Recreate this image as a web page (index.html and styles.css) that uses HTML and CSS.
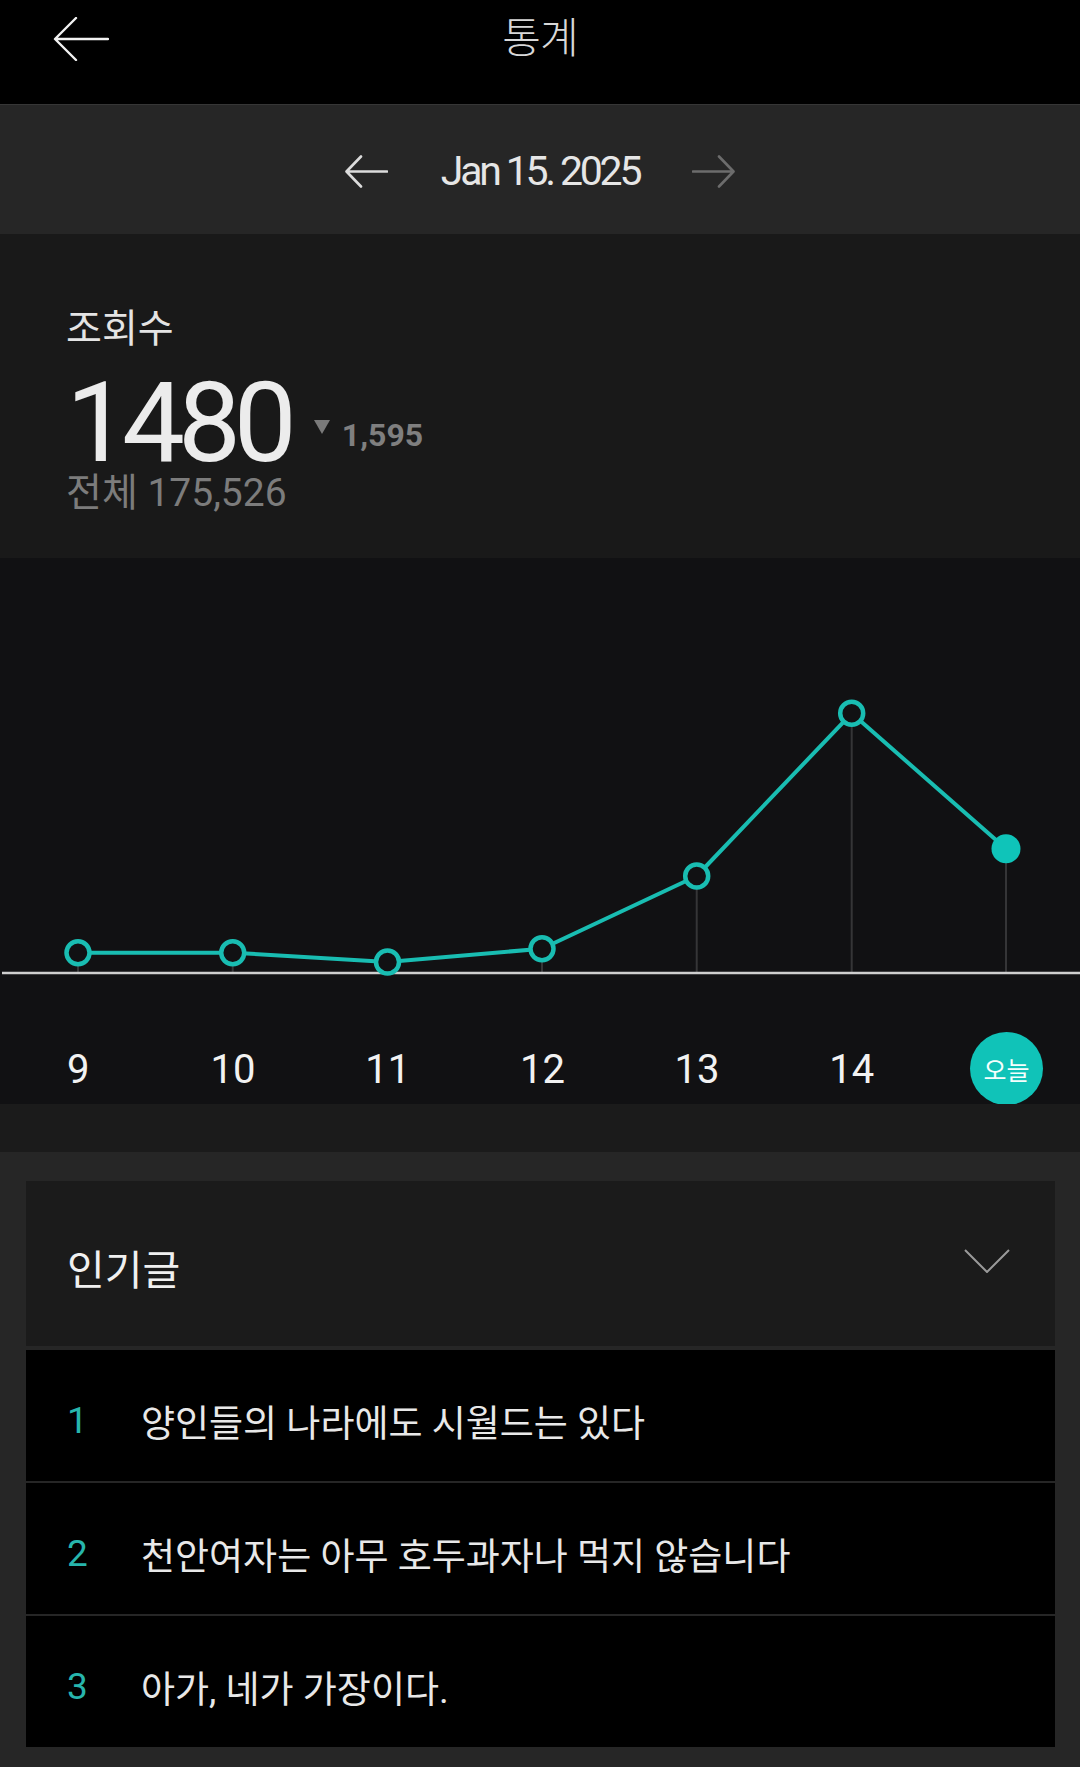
FILE: index.html
```html
<!DOCTYPE html>
<html lang="ko">
<head>
  <meta charset="UTF-8" />
  <meta name="viewport" content="width=device-width, initial-scale=1.0" />
  <title>통계</title>
  <link rel="stylesheet" href="styles.css">
</head>
<body>
  <!-- 상단 바 -->
  <header class="topbar">
    <button class="back" aria-label="뒤로">
      <svg width="56" height="44" viewBox="0 0 56 44">
        <path d="M55 22H3M23 1L2 22l21 21" fill="none" stroke="#f2f2f2" stroke-width="2.4" stroke-linecap="round" stroke-linejoin="round"/>
      </svg>
    </button>
    <h1 class="title">통계</h1>
    <span></span>
  </header>

  <!-- 날짜 선택 -->
  <div class="date-bar">
    <svg class="date-arrow" width="43" height="33" viewBox="0 0 43 33">
      <path d="M42 16.5H2M16 1.5L1.5 16.5 16 31.5" fill="none" stroke="#dcdcdc" stroke-width="2.6" stroke-linecap="round" stroke-linejoin="round"/>
    </svg>
    <span class="date">Jan 15. 2025</span>
    <svg class="date-arrow" width="43" height="33" viewBox="0 0 43 33">
      <path d="M1 16.5h40M27 1.5l14.5 15L27 31.5" fill="none" stroke="#6c6c6c" stroke-width="2.6" stroke-linecap="round" stroke-linejoin="round"/>
    </svg>
  </div>

  <!-- 조회수 -->
  <section class="stats">
    <div class="stats-label">조회수</div>
    <div class="stats-row">
      <span class="stats-count">1480</span>
      <span class="stats-diff"><i class="tri"></i>1,595</span>
    </div>
    <div class="stats-total">전체 175,526</div>
  </section>

  <!-- 그래프 -->
  <section class="chart">
    <svg class="plot" width="1080" height="432" viewBox="0 0 1080 432">
      <g stroke="#353537" stroke-width="2">
        <line x1="78" y1="395" x2="78" y2="415"/>
        <line x1="232.7" y1="395" x2="232.7" y2="415"/>
        <line x1="387.5" y1="404" x2="387.5" y2="415"/>
        <line x1="542" y1="391" x2="542" y2="415"/>
        <line x1="696.7" y1="318" x2="696.7" y2="415"/>
        <line x1="851.7" y1="155" x2="851.7" y2="415"/>
        <line x1="1006" y1="291" x2="1006" y2="415"/>
      </g>
      <line x1="2" y1="415" x2="1080" y2="415" stroke="#cfcfcf" stroke-width="2.5"/>
      <polyline points="78,394.7 232.7,394.7 387.5,404 542,390.7 696.7,318 851.7,155.3 1006,290.7" fill="none" stroke="#19bdb2" stroke-width="4" stroke-linejoin="round"/>
      <g fill="#111113" stroke="#19bdb2" stroke-width="4.5">
        <circle cx="78" cy="394.7" r="11.5"/>
        <circle cx="232.7" cy="394.7" r="11.5"/>
        <circle cx="387.5" cy="404" r="11.5"/>
        <circle cx="542" cy="390.7" r="11.5"/>
        <circle cx="696.7" cy="318" r="11.5"/>
        <circle cx="851.7" cy="155.3" r="11.5"/>
      </g>
      <circle cx="1006" cy="290.7" r="14.5" fill="#0fc4b9"/>
    </svg>
    <div class="days">
      <span>9</span>
      <span>10</span>
      <span>11</span>
      <span>12</span>
      <span>13</span>
      <span>14</span>
      <span><b class="today">오늘</b></span>
    </div>
  </section>

  <div class="spacer"></div>

  <!-- 인기글 -->
  <section class="popular">
    <div class="card">
      <div class="card-head">
        <h2>인기글</h2>
        <svg width="46" height="24" viewBox="0 0 46 24">
          <path d="M1 1l22 22L45 1" fill="none" stroke="#9a9a9a" stroke-width="2"/>
        </svg>
      </div>
      <div class="post"><span class="rank">1</span><span class="post-title">양인들의 나라에도 시월드는 있다</span></div>
      <div class="post"><span class="rank">2</span><span class="post-title">천안여자는 아무 호두과자나 먹지 않습니다</span></div>
      <div class="post"><span class="rank">3</span><span class="post-title">아가, 네가 가장이다.</span></div>
    </div>
  </section>
</body>
</html>
```

FILE: styles.css
```css
body {
  margin: 0;
  width: 1080px;
  background: #262626;
  font-family: Roboto, "Noto Sans CJK KR", sans-serif;
  color: #eee;
}

.topbar {
  height: 104px;
  box-sizing: border-box;
  padding-bottom: 26px;
  background: #000;
  display: grid;
  grid-template-columns: 1fr auto 1fr;
  align-items: center;
}

.back {
  justify-self: start;
  margin-left: 53px;
  padding: 0;
  border: none;
  background: none;
  display: flex;
}

.title {
  margin: 0;
  font-size: 42px;
  font-weight: 300;
  line-height: 44px;
  color: #d8d8d8;
  letter-spacing: -1px;
}

.date-bar {
  height: 130px;
  box-sizing: border-box;
  border-top: 1px solid #363636;
  background: #262626;
  display: flex;
  align-items: center;
  justify-content: center;
  gap: 53px;
  padding-top: 4px;
}

.date {
  font-size: 41px;
  letter-spacing: -3.2px;
  color: #e6e6e6;
  line-height: 1;
}

.stats {
  height: 324px;
  box-sizing: border-box;
  padding: 75px 0 0 66px;
  background: #191919;
}

.stats-label {
  font-size: 39px;
  line-height: 40px;
  color: #e4e4e4;
}

.stats-row {
  display: flex;
  margin-top: 24px;
}

.stats-count {
  font-size: 112px;
  line-height: 100px;
  letter-spacing: -7px;
  color: #ececec;
}

.stats-diff {
  display: flex;
  align-items: center;
  gap: 12px;
  margin: 46px 0 0 24px;
  height: 32px;
  font-size: 32px;
  font-weight: 700;
  color: #7f7f7f;
}

.tri {
  width: 0;
  height: 0;
  border-left: 8px solid transparent;
  border-right: 8px solid transparent;
  border-top: 14px solid #7a7a7a;
  margin-top: -16px;
}

.stats-total {
  font-size: 39px;
  line-height: 40px;
  color: #7c7c7c;
}

.chart {
  height: 546px;
  background: #111113;
  overflow: hidden;
}

.plot {
  display: block;
}

.days {
  height: 114px;
  box-sizing: border-box;
  padding: 41px 0 0 1px;
  display: grid;
  grid-template-columns: repeat(7, 154.7px);
}

.days span {
  height: 73px;
  display: flex;
  align-items: center;
  justify-content: center;
  font-size: 40px;
  color: #f2f2f2;
  padding-top: 2px;
}

.today {
  width: 73px;
  height: 73px;
  border-radius: 50%;
  background: #10c3b8;
  color: #f4fffd;
  font-size: 25px;
  font-weight: 400;
  display: flex;
  align-items: center;
  justify-content: center;
  margin-top: -2px;
}

.spacer {
  height: 48px;
  background: #1b1b1b;
}

.popular {
  padding: 29px 25px 20px 26px;
}

.card {
  display: flex;
  flex-direction: column;
  gap: 2px;
}

.card-head {
  height: 165px;
  margin-bottom: 2px;
  box-sizing: border-box;
  padding: 6px 45px 0 41px;
  background: #1b1b1b;
  display: flex;
  align-items: center;
  justify-content: space-between;
}

.card-head h2 {
  margin: 0;
  font-size: 41px;
  font-weight: 400;
  color: #f0f0f0;
}

.card-head svg {
  margin-top: -12px;
}

.post {
  height: 131px;
  background: #000;
  display: flex;
  align-items: center;
  padding-left: 41px;
  padding-top: 10px;
  box-sizing: border-box;
}

.rank {
  width: 74px;
  font-size: 37px;
  color: #27b5ac;
}

.post-title {
  font-size: 37px;
  color: #e8e8e8;
}
```
